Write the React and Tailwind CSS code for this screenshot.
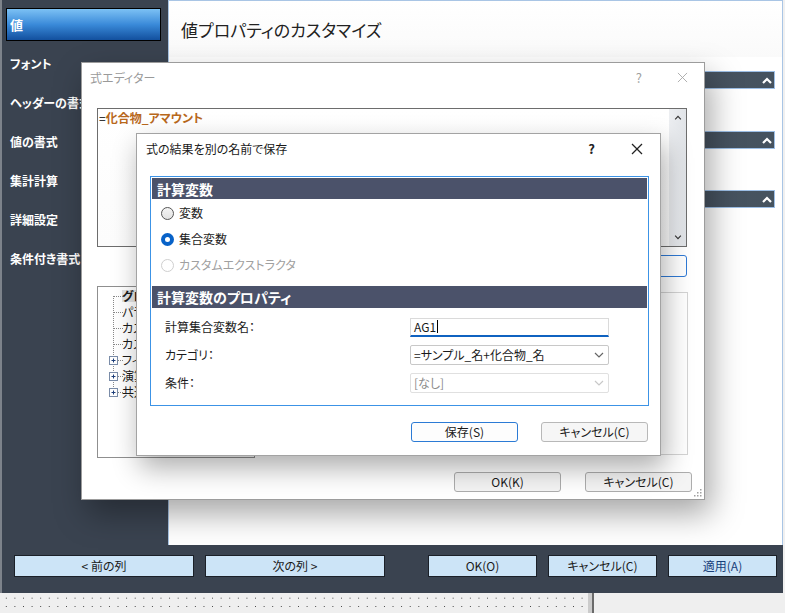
import React from "react";

function ChevUp({ className = "", color = "white", w = 10, h = 7, sw = 2.2 }) {
  return (
    <svg width={w} height={h} viewBox="0 0 10 7" className={className}>
      <polyline points="1,6 5,2 9,6" fill="none" stroke={color} strokeWidth={sw} />
    </svg>
  );
}

function ChevDown({ color = "#555", w = 10, h = 6, sw = 1.2 }) {
  return (
    <svg width={w} height={h} viewBox="0 0 10 6">
      <polyline points="1,1 5,5 9,1" fill="none" stroke={color} strokeWidth={sw} />
    </svg>
  );
}

function XIcon({ color = "#222", size = 12, sw = 1.2 }) {
  return (
    <svg width={size} height={size} viewBox="0 0 12 12">
      <line x1="1" y1="1" x2="11" y2="11" stroke={color} strokeWidth={sw} />
      <line x1="11" y1="1" x2="1" y2="11" stroke={color} strokeWidth={sw} />
    </svg>
  );
}

function SectionBar() {
  return (
    <div className="h-[18px] border border-[#9dbfe6] bg-gradient-to-r from-[#4b5169] to-[#46535f] flex items-center justify-end pr-[2px]">
      <ChevUp />
    </div>
  );
}

function Radio({ state }) {
  if (state === "on") {
    return (
      <span className="w-[13px] h-[13px] rounded-full bg-[#0862c8] flex items-center justify-center">
        <span className="w-[5px] h-[5px] rounded-full bg-white" />
      </span>
    );
  }
  if (state === "disabled") {
    return <span className="w-[13px] h-[13px] rounded-full border border-[#cfcfcf] bg-white" />;
  }
  return <span className="w-[13px] h-[13px] rounded-full border border-[#555] bg-gradient-to-b from-[#f4f4f4] to-[#e2e2e2]" />;
}

export default function App() {
  const sideItems = ["フォント", "ヘッダーの書式", "値の書式", "集計計算", "詳細設定", "条件付き書式"];
  const treeItems = [
    { t: "グローバル", bold: true, plus: false },
    { t: "パラメータ", plus: false },
    { t: "カスタム集計", plus: false },
    { t: "カスタム変数", plus: false },
    { t: "フィールド", plus: true },
    { t: "演算子", plus: true },
    { t: "共通関数", plus: true },
  ];
  const bottomBtn =
    "h-[22px] bg-[#cce4f7] border border-[#1b2028] text-[12px] text-[#1a1a1a] flex items-center justify-center";

  return (
    <div className="relative w-[785px] h-[613px] overflow-hidden bg-[#f0f0f0] font-['Noto_Sans_CJK_JP','Liberation_Sans',sans-serif] [font-feature-settings:'palt'] text-[12px] leading-none text-[#1a1a1a]">
      {/* main window */}
      <div className="flex flex-col w-[783px] h-[593px] bg-[#3a4350] border-l-2 border-[#7d838b]">
        <div className="flex h-[545px]">
          {/* sidebar */}
          <div className="w-[166px] pt-[8px] pl-[4px] pr-[7px] flex flex-col">
            <div className="h-[33px] border border-black bg-gradient-to-b from-[#7cc1f4] via-[#3a8ad9] to-[#13509e] text-white font-bold text-[13px] flex items-center pl-[3px] mb-[3px]">
              値
            </div>
            {sideItems.map((t) => (
              <div key={t} className="h-[39px] flex items-center pl-[4px] text-white font-bold text-[12px] whitespace-nowrap">
                {t}
              </div>
            ))}
          </div>
          {/* content */}
          <div className="flex-1 bg-white border-l border-t border-r border-[#a9c5e5] flex flex-col">
            <div className="h-[56px] pl-[12px] flex items-center text-[17px] text-[#222] bg-gradient-to-b from-white to-[#fafafa]">
              値プロパティのカスタマイズ
            </div>
            <div className="ml-[12px] mr-[7px] mt-[14px]">
              <SectionBar />
            </div>
            <div className="ml-[12px] mr-[7px] mt-[42px]">
              <SectionBar />
            </div>
            <div className="ml-[12px] mr-[7px] mt-[41px]">
              <SectionBar />
            </div>
          </div>
        </div>
        {/* bottom bar */}
        <div className="flex-1 flex items-start pt-[10px] pl-[12px] pr-[6px]">
          <div className="flex gap-[11px]">
            <div className={`${bottomBtn} w-[180px]`}>&lt; 前の列</div>
            <div className={`${bottomBtn} w-[180px]`}>次の列 &gt;</div>
          </div>
          <div className="ml-auto flex gap-[11px]">
            <div className={`${bottomBtn} w-[109px]`}>OK(O)</div>
            <div className={`${bottomBtn} w-[109px]`}>キャンセル(C)</div>
            <div className={`${bottomBtn} w-[109px] text-[#17407a]`}>適用(A)</div>
          </div>
        </div>
      </div>
      {/* floor strip */}
      <div className="flex h-[20px]">
        <div className="w-[588px] bg-[#efefef] bg-[radial-gradient(circle,#3a3a3a_0.6px,transparent_0.9px)] bg-[length:8.6px_8.3px] bg-[position:2px_1px]" />
        <div className="w-[6px] bg-[#cbcbcb] border-r-2 border-[#6a6a6a]" />
        <div className="flex-1 bg-[#efefef]" />
      </div>

      {/* expression editor dialog */}
      <div className="absolute left-[81px] top-[62px] w-[624px] h-[438px] bg-white border border-[#9c9c9c] shadow-[6px_14px_30px_rgba(0,0,0,0.35)] flex flex-col">
        <div className="h-[29px] flex items-center pl-[8px] pr-[16px] text-[#9a9a9a] text-[12px]">
          <span>式エディター</span>
          <span className="ml-auto text-[13px] text-[#a0a0a0]">?</span>
          <span className="ml-[35px]">
            <XIcon color="#a8a8a8" size={11} sw={1} />
          </span>
        </div>
        <div className="pl-[15px] pr-[17px] mt-[16px]">
          <div className="h-[139px] border border-[#6d6d6d] flex bg-gradient-to-b from-white to-[#fcfcfc]">
            <div className="flex-1 pl-[1px] pt-[3px] text-[12px] whitespace-nowrap">
              <span className="text-black">=</span>
              <span className="text-[#b8681c] font-bold">化合物_アマウント</span>
            </div>
            <div className="w-[17px] bg-gradient-to-r from-[#eceef1] to-[#e1e4e8] flex flex-col items-center justify-between py-[6px]">
              <ChevUp color="#333" w={8} h={5} sw={1.6} />
              <svg width="8" height="5" viewBox="0 0 10 7">
                <polyline points="1,1 5,5 9,1" fill="none" stroke="#333" strokeWidth="1.6" />
              </svg>
            </div>
          </div>
        </div>
        <div className="pl-[15px] pr-[17px] mt-[8px] flex justify-end">
          <div className="w-[80px] h-[22px] border border-[#2f7ad6] rounded-[3px] bg-white" />
        </div>
        <div className="pl-[15px] pr-[16px] mt-[9px] flex items-start">
          <div className="relative w-[158px] h-[172px] border border-[#8f8f8f] bg-white pt-[1px]">
            <svg className="absolute left-0 top-0" width="30" height="110">
              <line x1="15.5" y1="9" x2="15.5" y2="105" stroke="#888" strokeDasharray="1 1" />
              {treeItems.map((it, i) => (
                <line key={i} x1={it.plus ? 20 : 16} y1={9.5 + i * 16} x2="25" y2={9.5 + i * 16} stroke="#888" strokeDasharray="1 1" />
              ))}
              {treeItems.map((it, i) =>
                it.plus ? (
                  <g key={"p" + i}>
                    <rect x="11.5" y={5.5 + i * 16} width="8" height="8" fill="#fff" stroke="#7a8ca8" />
                    <line x1="13.5" y1={9.5 + i * 16} x2="17.5" y2={9.5 + i * 16} stroke="#1e3f7a" />
                    <line x1="15.5" y1={7.5 + i * 16} x2="15.5" y2={11.5 + i * 16} stroke="#1e3f7a" />
                  </g>
                ) : null
              )}
            </svg>
            <div className="w-[39px] overflow-hidden">
              {treeItems.map((it) => (
                <div key={it.t} className="h-[16px] flex items-center pl-[24px]">
                  <span className={`block w-[15px] overflow-hidden whitespace-nowrap ${it.bold ? "font-bold bg-[#e3e3e3]" : ""}`}>{it.t}</span>
                </div>
              ))}
            </div>
          </div>
          <div className="flex-1 mt-[6px] h-[163px] border border-[#d4d4d4] bg-white" />
        </div>
        <div className="pr-[12px] mt-[14px] flex justify-end gap-[24px]">
          <div className="w-[107px] h-[20px] border border-[#adadad] rounded-[3px] bg-[#f4f4f4] flex items-center justify-center text-[12px]">
            OK(K)
          </div>
          <div className="w-[107px] h-[20px] border border-[#adadad] rounded-[3px] bg-[#f4f4f4] flex items-center justify-center text-[12px]">
            キャンセル(C)
          </div>
        </div>
        <svg className="absolute right-[2px] bottom-[2px]" width="8" height="8" viewBox="0 0 8 8">
          {[[6, 0], [6, 3], [3, 3], [6, 6], [3, 6], [0, 6]].map(([x, y], i) => (
            <rect key={i} x={x} y={y} width="1.5" height="1.5" fill="#a0a0a0" />
          ))}
        </svg>
      </div>

      {/* save-as dialog */}
      <div className="absolute left-[136px] top-[133px] w-[525px] h-[323px] bg-white border border-[#a3a3a3] shadow-[4px_12px_26px_rgba(0,0,0,0.32)] flex flex-col">
        <div className="h-[29px] flex items-center pl-[9px] pr-[17px] text-[12px] text-[#1a1a1a]">
          <span>式の結果を別の名前で保存</span>
          <span className="ml-auto text-[13px] font-bold text-[#222]">?</span>
          <span className="ml-[36px]">
            <XIcon color="#222" size={12} sw={1.2} />
          </span>
        </div>
        <div className="ml-[13px] mt-[13px] w-[499px] h-[230px] border border-[#3c93e6] p-[1px] flex flex-col">
          <div className="h-[21px] bg-[#4b526a] text-white font-bold text-[14px] flex items-center pl-[5px]">計算変数</div>
          <div className="pt-[1px]">
            <div className="h-[26px] flex items-center gap-[5px] pl-[9px]">
              <Radio state="off" />
              <span>変数</span>
            </div>
            <div className="h-[26px] flex items-center gap-[5px] pl-[9px]">
              <Radio state="on" />
              <span>集合変数</span>
            </div>
            <div className="h-[26px] flex items-center gap-[5px] pl-[9px] text-[#a0a0a0]">
              <Radio state="disabled" />
              <span>カスタムエクストラクタ</span>
            </div>
          </div>
          <div className="mt-[8px] h-[22px] bg-[#4b526a] text-white font-bold text-[14px] flex items-center pl-[5px]">
            計算変数のプロパティ
          </div>
          <div className="pt-[9px] flex flex-col gap-[8px]">
            <div className="h-[20px] flex items-center">
              <span className="w-[258px] pl-[13px]">計算集合変数名：</span>
              <div className="w-[199px] h-[19px] border border-[#dadada] border-b-2 border-b-[#0f62c0] flex items-center pl-[3px] text-[12px]">
                AG1<span className="ml-[1px] w-[1px] h-[13px] bg-black" />
              </div>
            </div>
            <div className="h-[20px] flex items-center">
              <span className="w-[258px] pl-[13px]">カテゴリ：</span>
              <div className="w-[199px] h-[20px] border border-[#c8c8c8] rounded-[2px] flex items-center pl-[3px] pr-[4px]">
                <span>=サンプル_名+化合物_名</span>
                <span className="ml-auto">
                  <ChevDown color="#666" />
                </span>
              </div>
            </div>
            <div className="h-[20px] flex items-center">
              <span className="w-[258px] pl-[13px]">条件：</span>
              <div className="w-[199px] h-[20px] border border-[#e0e0e0] rounded-[2px] flex items-center pl-[3px] pr-[4px] text-[#8c8c8c]">
                <span>[なし]</span>
                <span className="ml-auto">
                  <ChevDown color="#c8c8c8" />
                </span>
              </div>
            </div>
          </div>
        </div>
        <div className="mt-[16px] pr-[12px] flex justify-end gap-[23px]">
          <div className="w-[107px] h-[20px] border border-[#2c7bd5] rounded-[3px] bg-[#fdfdfd] flex items-center justify-center">
            保存(S)
          </div>
          <div className="w-[107px] h-[20px] border border-[#b8b8b8] rounded-[3px] bg-[#f6f6f6] flex items-center justify-center">
            キャンセル(C)
          </div>
        </div>
      </div>
    </div>
  );
}
